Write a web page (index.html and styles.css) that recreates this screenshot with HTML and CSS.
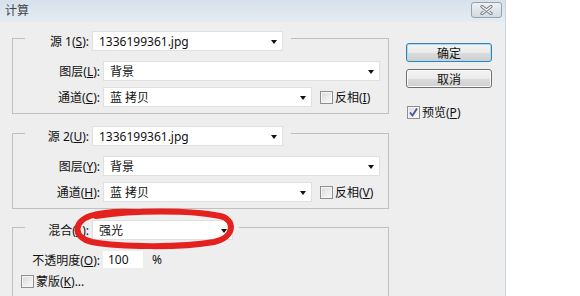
FILE: index.html
```html
<!DOCTYPE html>
<html lang="zh">
<head>
    <meta charset="UTF-8">
    <title>计算</title>
    <link rel="stylesheet" href="styles.css">
</head>
<body>
    <div class="dialog">
        <div class="titlebar">
            <span class="title">计算</span>
            <button class="close">
                <svg width="13" height="10" viewBox="0 0 13 10">
                    <path d="M2 1.5 L11 8.5 M11 1.5 L2 8.5" stroke="#6f7a86" stroke-width="3.2" stroke-linecap="round"/>
                    <path d="M2 1.5 L11 8.5 M11 1.5 L2 8.5" stroke="#f4f6f8" stroke-width="1.4" stroke-linecap="round"/>
                </svg>
            </button>
        </div>

        <div class="content">
            <div class="groups">
                <fieldset class="group">
                    <legend><div class="head">
                        <span class="hlabel">源 1(<u>S</u>):</span>
                        <div class="combo src"><span>1336199361.jpg</span><i class="arrow"></i></div>
                    </div></legend>
                    <div class="row first">
                        <span class="label">图层(<u>L</u>):</span>
                        <div class="combo wide"><span>背景</span><i class="arrow"></i></div>
                    </div>
                    <div class="row">
                        <span class="label">通道(<u>C</u>):</span>
                        <div class="combo chan"><span>蓝 拷贝</span><i class="arrow"></i></div>
                        <label class="check"><span class="box"></span>反相(<u>I</u>)</label>
                    </div>
                </fieldset>

                <fieldset class="group second">
                    <legend><div class="head">
                        <span class="hlabel">源 2(<u>U</u>):</span>
                        <div class="combo src"><span>1336199361.jpg</span><i class="arrow"></i></div>
                    </div></legend>
                    <div class="row first">
                        <span class="label">图层(<u>Y</u>):</span>
                        <div class="combo wide"><span>背景</span><i class="arrow"></i></div>
                    </div>
                    <div class="row">
                        <span class="label">通道(<u>H</u>):</span>
                        <div class="combo chan"><span>蓝 拷贝</span><i class="arrow"></i></div>
                        <label class="check"><span class="box"></span>反相(<u>V</u>)</label>
                    </div>
                </fieldset>

                <fieldset class="group blend">
                    <legend><div class="head">
                        <span class="hlabel">混合(<u>L</u>):</span>
                        <div class="combo mode"><span>强光</span><i class="arrow"></i></div>
                    </div></legend>
                    <div class="row opacity">
                        <span class="label">不透明度(<u>O</u>):</span>
                        <div class="field">100</div>
                        <span class="unit">%</span>
                    </div>
                    <div class="row mask">
                        <label class="check"><span class="box"></span>蒙版(<u>K</u>)...</label>
                    </div>
                </fieldset>
            </div>

            <div class="side">
                <button class="btn default">确定</button>
                <button class="btn">取消</button>
                <label class="check preview">
                    <span class="box on">
                        <svg width="11" height="11" viewBox="0 0 11 11"><path d="M2 5.5 L4.5 8.5 L9 1.5" fill="none" stroke="#3d57a0" stroke-width="1.8"/></svg>
                    </span>预览(<u>P</u>)
                </label>
            </div>
        </div>

        <svg class="scribble" width="506" height="296" viewBox="0 0 506 296">
            <path d="M96 216 C 135 210, 190 210, 220 216 C 235 219, 236 237, 214 242 C 180 248, 120 247, 92 242 C 73 238, 73 222, 90 216 C 102 212, 118 211, 136 212"
                  fill="none" stroke="#e4211f" stroke-width="6" stroke-linecap="round"/>
        </svg>
    </div>
</body>
</html>
```

FILE: styles.css
```css
* { margin: 0; padding: 0; box-sizing: border-box; }
body { background: #fff; font-family: "Noto Sans", "Noto Sans CJK SC", sans-serif; font-size: 12px; color: #111; overflow: hidden; }
u { text-decoration: underline; text-underline-offset: 1px; }

.dialog { position: relative; width: 506px; height: 296px; background: #eeeeee; border-right: 1px solid #c8d4df; overflow: hidden; }

.titlebar { height: 22px; display: flex; align-items: center; justify-content: space-between; padding: 0 3px 0 5px; background: linear-gradient(#d6e1ec, #e5ebf1); }
.title { color: #444; line-height: 16px; }
.close { width: 31px; height: 16px; margin-top: -2px; display: flex; align-items: center; justify-content: center; border: 1px solid #97a1ab; border-radius: 3px; background: linear-gradient(#eef1f4, #d3dae1); }

.content { display: flex; padding-left: 12px; }
.groups { width: 377px; padding-top: 4px; }

.group { border: 1px solid #c0c0c0; padding: 0 0 6px 0; margin: 0; min-width: 0; }
.group.second { margin-top: 7px; }
.group.blend { margin-top: 6px; padding-bottom: 20px; }
.group legend { margin-left: 12px; padding: 5px 8px 0 0; }
.head { display: flex; align-items: center; }
.hlabel { width: 64px; margin-right: 3px; text-align: right; white-space: nowrap; }
.blend .hlabel { width: 64px; }
.blend legend { padding-right: 6px; }

.row { display: flex; align-items: center; height: 20px; margin-top: 6px; }
.row.first { margin-top: 10px; }
.label { width: 87px; margin-right: 3px; text-align: right; white-space: nowrap; }

.combo { position: relative; height: 20px; display: flex; align-items: center; padding-left: 6px; background: #fff; border: 1px solid #e0e0e0; white-space: nowrap; }
.combo.src { width: 191px; }
.combo.wide { width: 277px; }
.combo.chan { width: 209px; }
.combo.mode { width: 141px; }
.arrow { position: absolute; right: 5px; top: 8px; border-left: 3.5px solid transparent; border-right: 3.5px solid transparent; border-top: 4px solid #111; }

.check { display: flex; align-items: center; white-space: nowrap; }
.box { width: 13px; height: 13px; margin-right: 2px; display: flex; align-items: center; justify-content: center; border: 1px solid #8f8f8f; background: linear-gradient(135deg, #dadada, #fbfbfb); box-shadow: inset 0 0 0 1px #f4f4f4; }
.row .check { margin-left: 8px; }

.opacity { margin-top: 11px; height: 17px; }
.field { width: 40px; height: 17px; padding-left: 5px; line-height: 17px; background: #fff; }
.unit { margin-left: 9px; }
.mask { margin-top: 5px; height: 16px; }
.row.mask .check { margin-left: 8px; }

.side { margin-left: 17px; padding-top: 21px; display: flex; flex-direction: column; align-items: flex-start; }
.btn { width: 86px; height: 19px; font: inherit; color: #111; border: 1px solid #707070; border-radius: 3px; background: linear-gradient(#f3f3f3 0%, #ebebeb 50%, #dcdcdc 51%, #cfcfcf 100%); box-shadow: inset 0 0 0 1px #fbfbfb; }
.btn + .btn { margin-top: 7px; }
.btn.default { border-color: #3c7fb1; box-shadow: inset 0 0 0 1px #a9dcf4; }
.preview { margin-top: 15px; margin-left: 1px; }

.scribble { position: absolute; left: 0; top: 0; pointer-events: none; }
```
